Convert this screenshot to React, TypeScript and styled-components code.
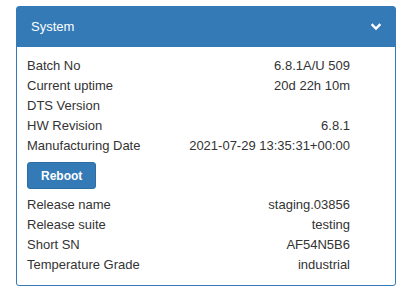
import React from "react";
import styled, { createGlobalStyle } from "styled-components";

const Global = createGlobalStyle`
  html, body { margin: 0; padding: 0; background: #fff; }
  body { font-family: "Liberation Sans", Arial, sans-serif; font-size: 13px; color: #333; }
`;

const Page = styled.div`
  padding: 6px 20px 0 16px;
  width: 416px;
  box-sizing: border-box;
`;

const Panel = styled.section`
  width: 380px;
  border: 1px solid #337ab7;
  border-radius: 3px;
  box-sizing: border-box;
  background: #fff;
`;

const Header = styled.header`
  height: 39px;
  background: #337ab7;
  color: #fff;
  display: flex;
  align-items: center;
  justify-content: space-between;
  padding: 0 14px 1px 14px;
  font-size: 13px;
`;

const Body = styled.div`
  padding: 9px 45px 10px 10px;
  display: flex;
  flex-direction: column;
`;

const Row = styled.div`
  display: flex;
  justify-content: space-between;
  line-height: 20px;
  height: 20px;
`;

const Label = styled.span``;
const Value = styled.span`
  text-align: right;
`;

const Button = styled.button`
  align-self: flex-start;
  margin: 6px 0 6px 0;
  height: 27px;
  padding: 0 13px;
  background: #337ab7;
  border: 1px solid #2e6da4;
  border-radius: 3px;
  color: #fff;
  font-family: "Liberation Sans", Arial, sans-serif;
  font-weight: bold;
  font-size: 12px;
`;

const Chevron = () => (
  <svg width="10" height="8" viewBox="0 0 10 8">
    <path d="M1.5 2 L5 5.5 L8.5 2" stroke="#fff" strokeWidth="2.4" fill="none" strokeLinecap="square" />
  </svg>
);

const top: [string, string][] = [
  ["Batch No", "6.8.1A/U 509"],
  ["Current uptime", "20d 22h 10m"],
  ["DTS Version", ""],
  ["HW Revision", "6.8.1"],
  ["Manufacturing Date", "2021-07-29 13:35:31+00:00"],
];
const bottom: [string, string][] = [
  ["Release name", "staging.03856"],
  ["Release suite", "testing"],
  ["Short SN", "AF54N5B6"],
  ["Temperature Grade", "industrial"],
];

export default function App() {
  return (
    <>
      <Global />
      <Page>
        <Panel>
          <Header>
            <span>System</span>
            <Chevron />
          </Header>
          <Body>
            {top.map(([k, v]) => (
              <Row key={k}>
                <Label>{k}</Label>
                <Value>{v}</Value>
              </Row>
            ))}
            <Button>Reboot</Button>
            {bottom.map(([k, v]) => (
              <Row key={k}>
                <Label>{k}</Label>
                <Value>{v}</Value>
              </Row>
            ))}
          </Body>
        </Panel>
      </Page>
    </>
  );
}
